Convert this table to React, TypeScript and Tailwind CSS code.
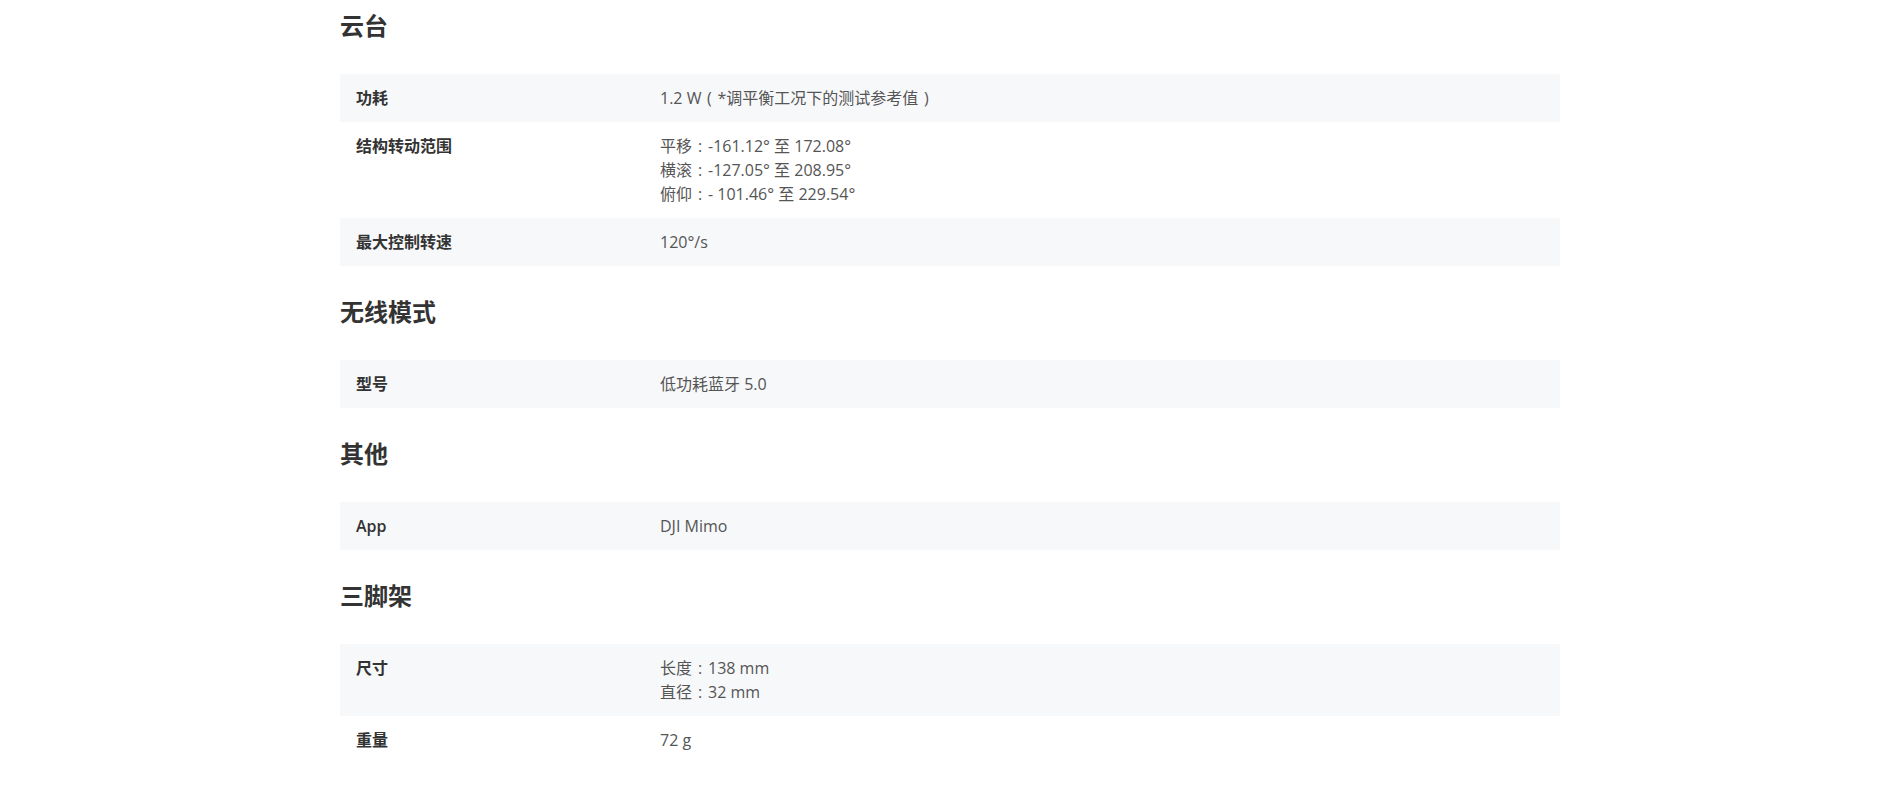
import React from 'react';

type Spec = { label: string; values: string[] };
type Section = { title: string; rows: Spec[] };

const sections: Section[] = [
    {
        title: '云台',
        rows: [
            { label: '功耗', values: ['1.2 W（*调平衡工况下的测试参考值）'] },
            { label: '结构转动范围', values: ['平移：-161.12° 至 172.08°', '横滚：-127.05° 至 208.95°', '俯仰：- 101.46° 至 229.54°'] },
            { label: '最大控制转速', values: ['120°/s'] },
        ],
    },
    {
        title: '无线模式',
        rows: [{ label: '型号', values: ['低功耗蓝牙 5.0'] }],
    },
    {
        title: '其他',
        rows: [{ label: 'App', values: ['DJI Mimo'] }],
    },
    {
        title: '三脚架',
        rows: [
            { label: '尺寸', values: ['长度：138 mm', '直径：32 mm'] },
            { label: '重量', values: ['72 g'] },
        ],
    },
];

const font = { fontFamily: '"Open Sans", "Noto Sans CJK SC", sans-serif' };

const punct: Record<string, string> = { '：': ':', '（': '(', '）': ')' };

const Value: React.FC<{ text: string }> = ({ text }) => (
    <div>
        {text.split(/([：（）])/).map((part, i) =>
            punct[part] ? (
                <span key={i} className="inline-block w-4 text-center">{punct[part]}</span>
            ) : (
                <span key={i}>{part}</span>
            )
        )}
    </div>
);

const App: React.FC = () => {
    return (
        <div className="min-h-screen bg-white" style={font}>
            <div className="mx-auto w-[1220px] pt-[10px] pb-10">
                {sections.map((section, si) => (
                    <section key={section.title} className={si === 0 ? '' : 'mt-[30px]'}>
                        <h2 className="text-[24px] leading-8 font-bold text-[#333] mb-8">{section.title}</h2>
                        <div>
                            {section.rows.map((row, ri) => (
                                <div
                                    key={row.label}
                                    className={`flex px-4 py-3 text-base leading-6 ${ri % 2 === 0 ? 'bg-[#f7f8fa]' : 'bg-white'}`}
                                >
                                    <div className="w-[304px] shrink-0 font-semibold text-[#333]">{row.label}</div>
                                    <div className="flex-1 text-[#555]">
                                        {row.values.map((v) => (
                                            <Value key={v} text={v} />
                                        ))}
                                    </div>
                                </div>
                            ))}
                        </div>
                    </section>
                ))}
            </div>
        </div>
    );
};

export default App;
